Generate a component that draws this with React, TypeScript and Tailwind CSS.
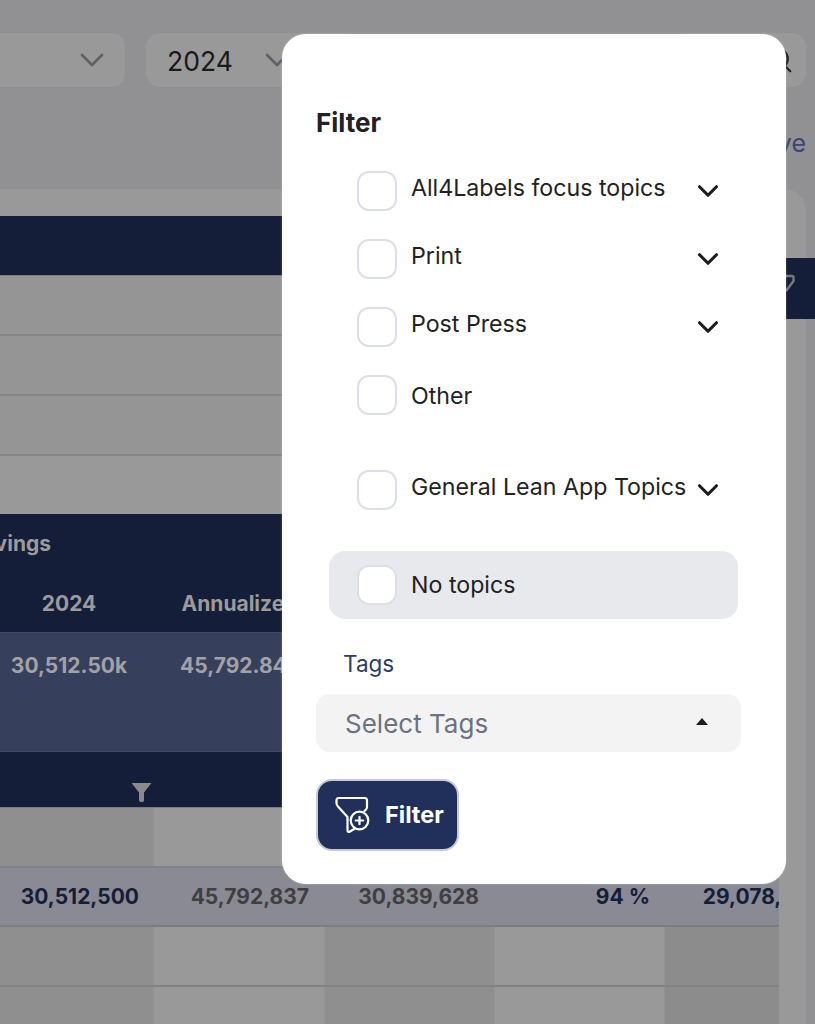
import React from 'react';
import { ChevronDown, Search } from 'lucide-react';

const font = { fontFamily: 'Inter, "Noto Sans", sans-serif' };

function SolidFunnel() {
  return (
    <svg width="21" height="20" viewBox="0 0 21 20" fill="#8a8a8c">
      <path d="M0.5 1 H20.5 L13 10.5 V18.5 Q13 20 10.5 20 Q8 20 8 18.5 V10.5 Z" />
    </svg>
  );
}

function FilterPlusIcon() {
  return (
    <svg width="38" height="40" viewBox="0 0 38 40" fill="none" stroke="#ffffff" strokeWidth="2.2" strokeLinecap="round" strokeLinejoin="round">
      <path d="M31.5 16 L33 14.5 Q34 13.5 34 12 V5.5 Q34 3 31.5 3 H6 Q3.5 3 3.5 5.5 V8 Q3.5 10 5 11.5 L14.5 22 V35 Q14.5 38 17 36.5 L22 33.5" />
      <circle cx="26.5" cy="25.5" r="8.8" />
      <path d="M26.5 21.8 V29.2 M22.8 25.5 H30.2" />
    </svg>
  );
}

function TopicRow({ label, chevron, className, textClass }: { label: string; chevron?: boolean; className?: string; textClass?: string }) {
  return (
    <div className={`flex items-center h-[40px] pl-[75px] ${className ?? ''}`}>
      <span className="w-[40px] h-[40px] shrink-0 bg-white rounded-[12px] border-2 border-[#dcdfe8]" />
      <span className={`ml-[14px] text-[23.2px] leading-[40px] text-[#222222] whitespace-nowrap ${textClass ?? '-mt-[6px]'}`}>{label}</span>
      {chevron && <ChevronDown className="absolute left-[409px] w-[34px] h-[34px] text-[#1c1c1c]" strokeWidth={2.2} />}
    </div>
  );
}

function BodyRow({ last }: { last?: boolean }) {
  const shades = ['bg-[#8f8f8f]', 'bg-[#999999]', 'bg-[#8f8f8f]', 'bg-[#999999]', 'bg-[#8c8c8c]'];
  return (
    <div className={`flex h-[60px] shrink-0 ${last ? '' : 'border-b-2 border-[#838383]'}`}>
      {shades.map((shade, i) => (
        <div key={i} className={`${shade} ${i === 0 ? 'w-[154px]' : i === 1 ? 'w-[171px]' : 'w-[170px]'} shrink-0 border-r border-[#939393]`} />
      ))}
    </div>
  );
}

export default function App() {
  return (
    <div style={font} className="w-[815px] h-[1024px] overflow-hidden relative bg-[#919194] pt-[33px]">
      {/* Dimmed page */}
      <div className="flex h-[54px]">
        <div className="w-[125px] h-[54px] bg-[#99999a] rounded-r-[14px] flex items-center justify-end pr-[13px]">
          <ChevronDown className="w-[40px] h-[40px] text-[#606068]" strokeWidth={1.6} />
        </div>
        <div className="ml-[21px] w-[200px] h-[54px] bg-[#99999a] rounded-l-[14px] flex items-center pl-[21px]">
          <span className="mt-[3px] text-[26.5px] text-[#1a1a1a]">2024</span>
          <ChevronDown className="ml-[24px] w-[40px] h-[40px] text-[#606068]" strokeWidth={1.6} />
        </div>
        <div className="ml-auto mr-[9px] w-[120px] h-[54px] bg-[#99999a] rounded-r-[14px] flex items-center justify-end pr-[12px]">
          <Search className="w-[30px] h-[30px] text-[#1f1f1f]" strokeWidth={1.8} />
        </div>
      </div>

      <div className="flex justify-end pr-[9px] mt-[38px] h-[36px] text-[25px] leading-[36px] text-[#3b4672]">
        Save
      </div>

      <div className="w-[806px] mt-[28px] pt-[27px] bg-[#999999] rounded-tr-[22px] h-[835px] flex">
        <div className="w-[779px] shrink-0 overflow-hidden">
          <div className="h-[60px] bg-[#141e38] border-b border-[#7d7d80]" />
          {[0, 1, 2].map((i) => (
            <div key={i} className="h-[60px] bg-[#959595] border-b-2 border-[#858585]" />
          ))}
          <div className="h-[58px] bg-[#999999]" />

          <div className="bg-[#141e38] h-[118px] text-[#9b9b9b] font-bold text-[21px]">
            <div className="h-[60px] flex items-center -ml-[50px]">
              <span className="w-[101px] text-right whitespace-nowrap">Savings</span>
            </div>
            <div className="flex h-[58px] pt-[14px] -ml-[16px]">
              <span className="w-[170px] text-center">2024</span>
              <span className="w-[171px] text-center whitespace-nowrap">Annualized</span>
            </div>
          </div>
          <div className="h-[120px] bg-[#363f5c] border-y border-[#3f4863] flex -ml-[16px] pt-[17px] font-bold text-[21px] text-[#a2a2a4]">
            <span className="w-[170px] text-center">30,512.50k</span>
            <span className="w-[171px] text-center">45,792.84k</span>
          </div>
          <div className="h-[56px] bg-[#141e38] border-b border-[#7d7d80] flex items-end pb-[5px] pl-[131px]">
            <SolidFunnel />
          </div>

          <BodyRow />
          <div className="flex h-[59px] bg-[#8a8a94] border-b-2 border-[#7b7b80] items-center text-[21px] font-bold whitespace-nowrap">
            <span className="w-[154px] shrink-0 text-right pr-[15px] text-[#141e38]">30,512,500</span>
            <span className="w-[171px] shrink-0 text-right pr-[16px] text-[#3f3f42]">45,792,837</span>
            <span className="w-[170px] shrink-0 text-right pr-[16px] text-[#3f3f42]">30,839,628</span>
            <span className="w-[170px] shrink-0 text-right pr-[15px] text-[#141e38]">94 %</span>
            <span className="w-[170px] shrink-0 text-right pr-[12px] text-[#141e38]">29,078,500</span>
          </div>
          <BodyRow />
          <BodyRow last />
        </div>

        {/* Sticky column cell peeking out to the right of the dialog */}
        <div className="mt-[42px] ml-[7px] w-[29px] h-[61px] shrink-0 bg-[#141e38] overflow-hidden">
          <svg width="14" height="22" viewBox="0 0 14 22" fill="none" stroke="#77797f" strokeWidth="2.4" className="ml-[-4px] mt-[16px]">
            <path d="M1 2 H10 Q11.5 2 11.5 3.5 V7 L4 17" />
          </svg>
        </div>
      </div>

      {/* Filter dialog */}
      <div className="absolute left-[282px] top-[34px] w-[504px] h-[850px] bg-white rounded-[24px] shadow-[0_0_2px_rgba(255,255,255,0.4)] flex flex-col">
        <h2 className="ml-[34px] mt-[69px] h-[40px] text-[26px] leading-[40px] font-bold text-[#222222]">Filter</h2>

        <div className="mt-[28px] flex flex-col gap-[28px]">
          <TopicRow label="All4Labels focus topics" chevron />
          <TopicRow label="Print" chevron />
          <TopicRow label="Post Press" chevron />
          <TopicRow label="Other" textClass="mt-[1px]" />
        </div>
        <TopicRow label="General Lean App Topics" chevron className="mt-[55px]" />

        <div className="ml-[47px] mt-[41px] w-[409px] h-[68px] bg-[#e8e9ed] rounded-[16px] flex items-center pl-[28px]">
          <span className="w-[40px] h-[40px] shrink-0 bg-white rounded-[12px] border-2 border-[#dcdfe8]" />
          <span className="ml-[14px] text-[23.2px] text-[#222222]">No topics</span>
        </div>

        <div className="ml-[61px] mt-[27px] h-[36px] text-[22.5px] leading-[36px] text-[#2a3c6b]">Tags</div>

        <div className="ml-[34px] mt-[12px] w-[425px] h-[58px] bg-[#f3f3f4] rounded-[14px] flex items-center justify-between pl-[29px] pr-[33px]">
          <span className="text-[26px] text-[#6b7280]">Select Tags</span>
          <span className="w-0 h-0 mb-[3px] border-x-[6px] border-x-transparent border-b-[7px] border-b-[#1c1c1c]" />
        </div>

        <button className="ml-[34px] mt-[27px] w-[143px] h-[72px] bg-[#20305a] rounded-[16px] border-2 border-[#c5c9d6] flex items-center pl-[15px] text-white">
          <FilterPlusIcon />
          <span className="ml-[14px] text-[23.5px] font-bold">Filter</span>
        </button>
      </div>
    </div>
  );
}
